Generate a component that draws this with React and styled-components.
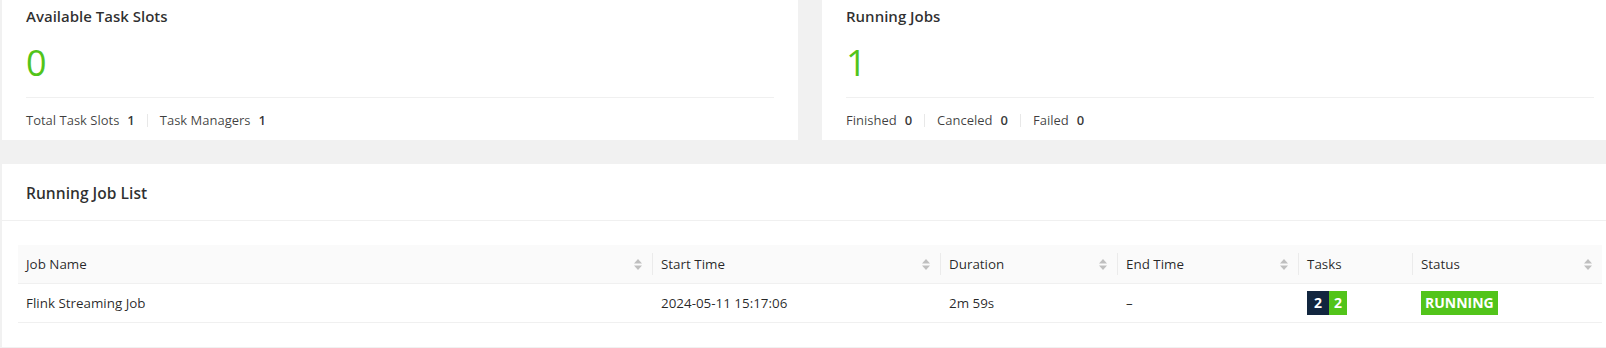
import React from "react";
import styled, { createGlobalStyle } from "styled-components";

const green = "#52c41a";
const navy = "#12263f";
const text = "rgba(0, 0, 0, 0.85)";
const line = "#f0f0f0";

const GlobalStyle = createGlobalStyle`
  html, body {
    margin: 0;
    padding: 0;
    background: #f1f1f1;
    overflow: hidden;
  }
  body {
    font-family: "Open Sans", "Noto Sans", sans-serif;
    font-size: 13.4px;
    color: ${text};
  }
`;

const Page = styled.div`
  width: 1616px;
  margin-left: 2px;
  display: flex;
  flex-direction: column;
  gap: 24px;
`;

const TopRow = styled.div`
  display: grid;
  grid-template-columns: 796px 796px;
  gap: 24px;
`;

const StatCard = styled.div`
  background: #fff;
  height: 140px;
  padding: 0 24px;
  box-sizing: border-box;
  display: flex;
  flex-direction: column;
`;

const CardTitle = styled.div`
  padding-top: 5px;
  font-size: 15px;
  font-weight: 600;
  line-height: 22px;
  color: rgba(0, 0, 0, 0.82);
`;

const BigNumber = styled.div`
  margin-top: 18px;
  font-size: 36px;
  line-height: 36px;
  color: ${green};
`;

const Divider = styled.div`
  margin-top: 16px;
  border-top: 1px solid ${line};
`;

const Footer = styled.div`
  flex: 1;
  display: flex;
  align-items: center;
  padding-top: 2px;
  font-size: 13px;
`;

const FooterLabel = styled.span`
  color: rgba(0, 0, 0, 0.75);
`;

const FooterValue = styled.span`
  margin-left: 8px;
  font-weight: 600;
  color: rgba(0, 0, 0, 0.8);
`;

const FooterSep = styled.span`
  width: 1px;
  height: 13px;
  margin: 0 12px;
  background: #e8e8e8;
`;

const ListCard = styled.div`
  background: #fff;
  height: 183px;
  display: flex;
  flex-direction: column;
`;

const ListHead = styled.div`
  height: 57px;
  padding: 2px 24px 0;
  box-sizing: border-box;
  display: flex;
  align-items: center;
  border-bottom: 1px solid ${line};
  font-size: 15.6px;
  font-weight: 600;
  color: rgba(0, 0, 0, 0.82);
`;

const ListBody = styled.div`
  padding: 24px 16px;
`;

const Table = styled.table`
  width: 1584px;
  table-layout: fixed;
  border-collapse: collapse;
  border-spacing: 0;
`;

const HeadCell = styled.th`
  padding: 0;
  height: 38px;
  background: #fafafa;
  border-bottom: 1px solid ${line};
  font-weight: 400;
  text-align: left;
`;

const HeadInner = styled.div`
  display: flex;
  align-items: center;
  height: 38px;
  padding-left: ${(p) => (p.$first ? "8px" : "0")};
  padding-right: 10px;
`;

const HeadSep = styled.span`
  width: 1px;
  height: 22px;
  margin-right: 8px;
  background: rgba(0, 0, 0, 0.06);
`;

const HeadLabel = styled.span`
  flex: 1;
  color: ${text};
`;

const Cell = styled.td`
  height: 38px;
  padding: 0 0 0 ${(p) => (p.$first ? "8px" : "9px")};
  border-bottom: 1px solid ${line};
  color: ${text};
`;

const TaskBadges = styled.span`
  display: inline-flex;
  vertical-align: middle;
`;

const Badge = styled.span`
  display: inline-block;
  height: 24px;
  line-height: 24px;
  padding: 0 ${(p) => p.$pad};
  background: ${(p) => p.$bg};
  color: #fff;
  font-size: 14px;
  font-weight: 700;
`;

const StatusTag = styled.span`
  display: inline-block;
  height: 24px;
  line-height: 24px;
  padding: 0 4px;
  background: ${green};
  color: #fff;
  font-size: 14px;
  font-weight: 700;
  vertical-align: middle;
`;

const Sorter = () => (
  <svg width="8" height="11" viewBox="0 0 8 11">
    <path d="M4 0 L8 4.5 L0 4.5 Z" fill="#bfbfbf" />
    <path d="M0 6.5 L8 6.5 L4 11 Z" fill="#bfbfbf" />
  </svg>
);

const columns = [
  { title: "Job Name", width: 634, sort: true },
  { title: "Start Time", width: 288, sort: true },
  { title: "Duration", width: 177, sort: true },
  { title: "End Time", width: 181, sort: true },
  { title: "Tasks", width: 114, sort: false },
  { title: "Status", width: 190, sort: true },
];

const Stat = ({ title, value, items }) => (
  <StatCard>
    <CardTitle>{title}</CardTitle>
    <BigNumber>{value}</BigNumber>
    <Divider />
    <Footer>
      {items.map((it, i) => (
        <React.Fragment key={it.label}>
          {i > 0 && <FooterSep />}
          <FooterLabel>{it.label}</FooterLabel>
          <FooterValue>{it.value}</FooterValue>
        </React.Fragment>
      ))}
    </Footer>
  </StatCard>
);

export default function App() {
  return (
    <>
      <GlobalStyle />
      <Page>
        <TopRow>
          <Stat
            title="Available Task Slots"
            value="0"
            items={[
              { label: "Total Task Slots", value: 1 },
              { label: "Task Managers", value: 1 },
            ]}
          />
          <Stat
            title="Running Jobs"
            value="1"
            items={[
              { label: "Finished", value: 0 },
              { label: "Canceled", value: 0 },
              { label: "Failed", value: 0 },
            ]}
          />
        </TopRow>
        <ListCard>
          <ListHead>Running Job List</ListHead>
          <ListBody>
            <Table>
              <colgroup>
                {columns.map((c) => (
                  <col key={c.title} style={{ width: c.width }} />
                ))}
              </colgroup>
              <thead>
                <tr>
                  {columns.map((c, i) => (
                    <HeadCell key={c.title}>
                      <HeadInner $first={i === 0}>
                        {i > 0 && <HeadSep />}
                        <HeadLabel>{c.title}</HeadLabel>
                        {c.sort && <Sorter />}
                      </HeadInner>
                    </HeadCell>
                  ))}
                </tr>
              </thead>
              <tbody>
                <tr>
                  <Cell $first>Flink Streaming Job</Cell>
                  <Cell>2024-05-11 15:17:06</Cell>
                  <Cell>2m 59s</Cell>
                  <Cell>–</Cell>
                  <Cell>
                    <TaskBadges>
                      <Badge $bg={navy} $pad="7px">2</Badge>
                      <Badge $bg={green} $pad="5px">2</Badge>
                    </TaskBadges>
                  </Cell>
                  <Cell>
                    <StatusTag>RUNNING</StatusTag>
                  </Cell>
                </tr>
              </tbody>
            </Table>
          </ListBody>
        </ListCard>
      </Page>
    </>
  );
}
